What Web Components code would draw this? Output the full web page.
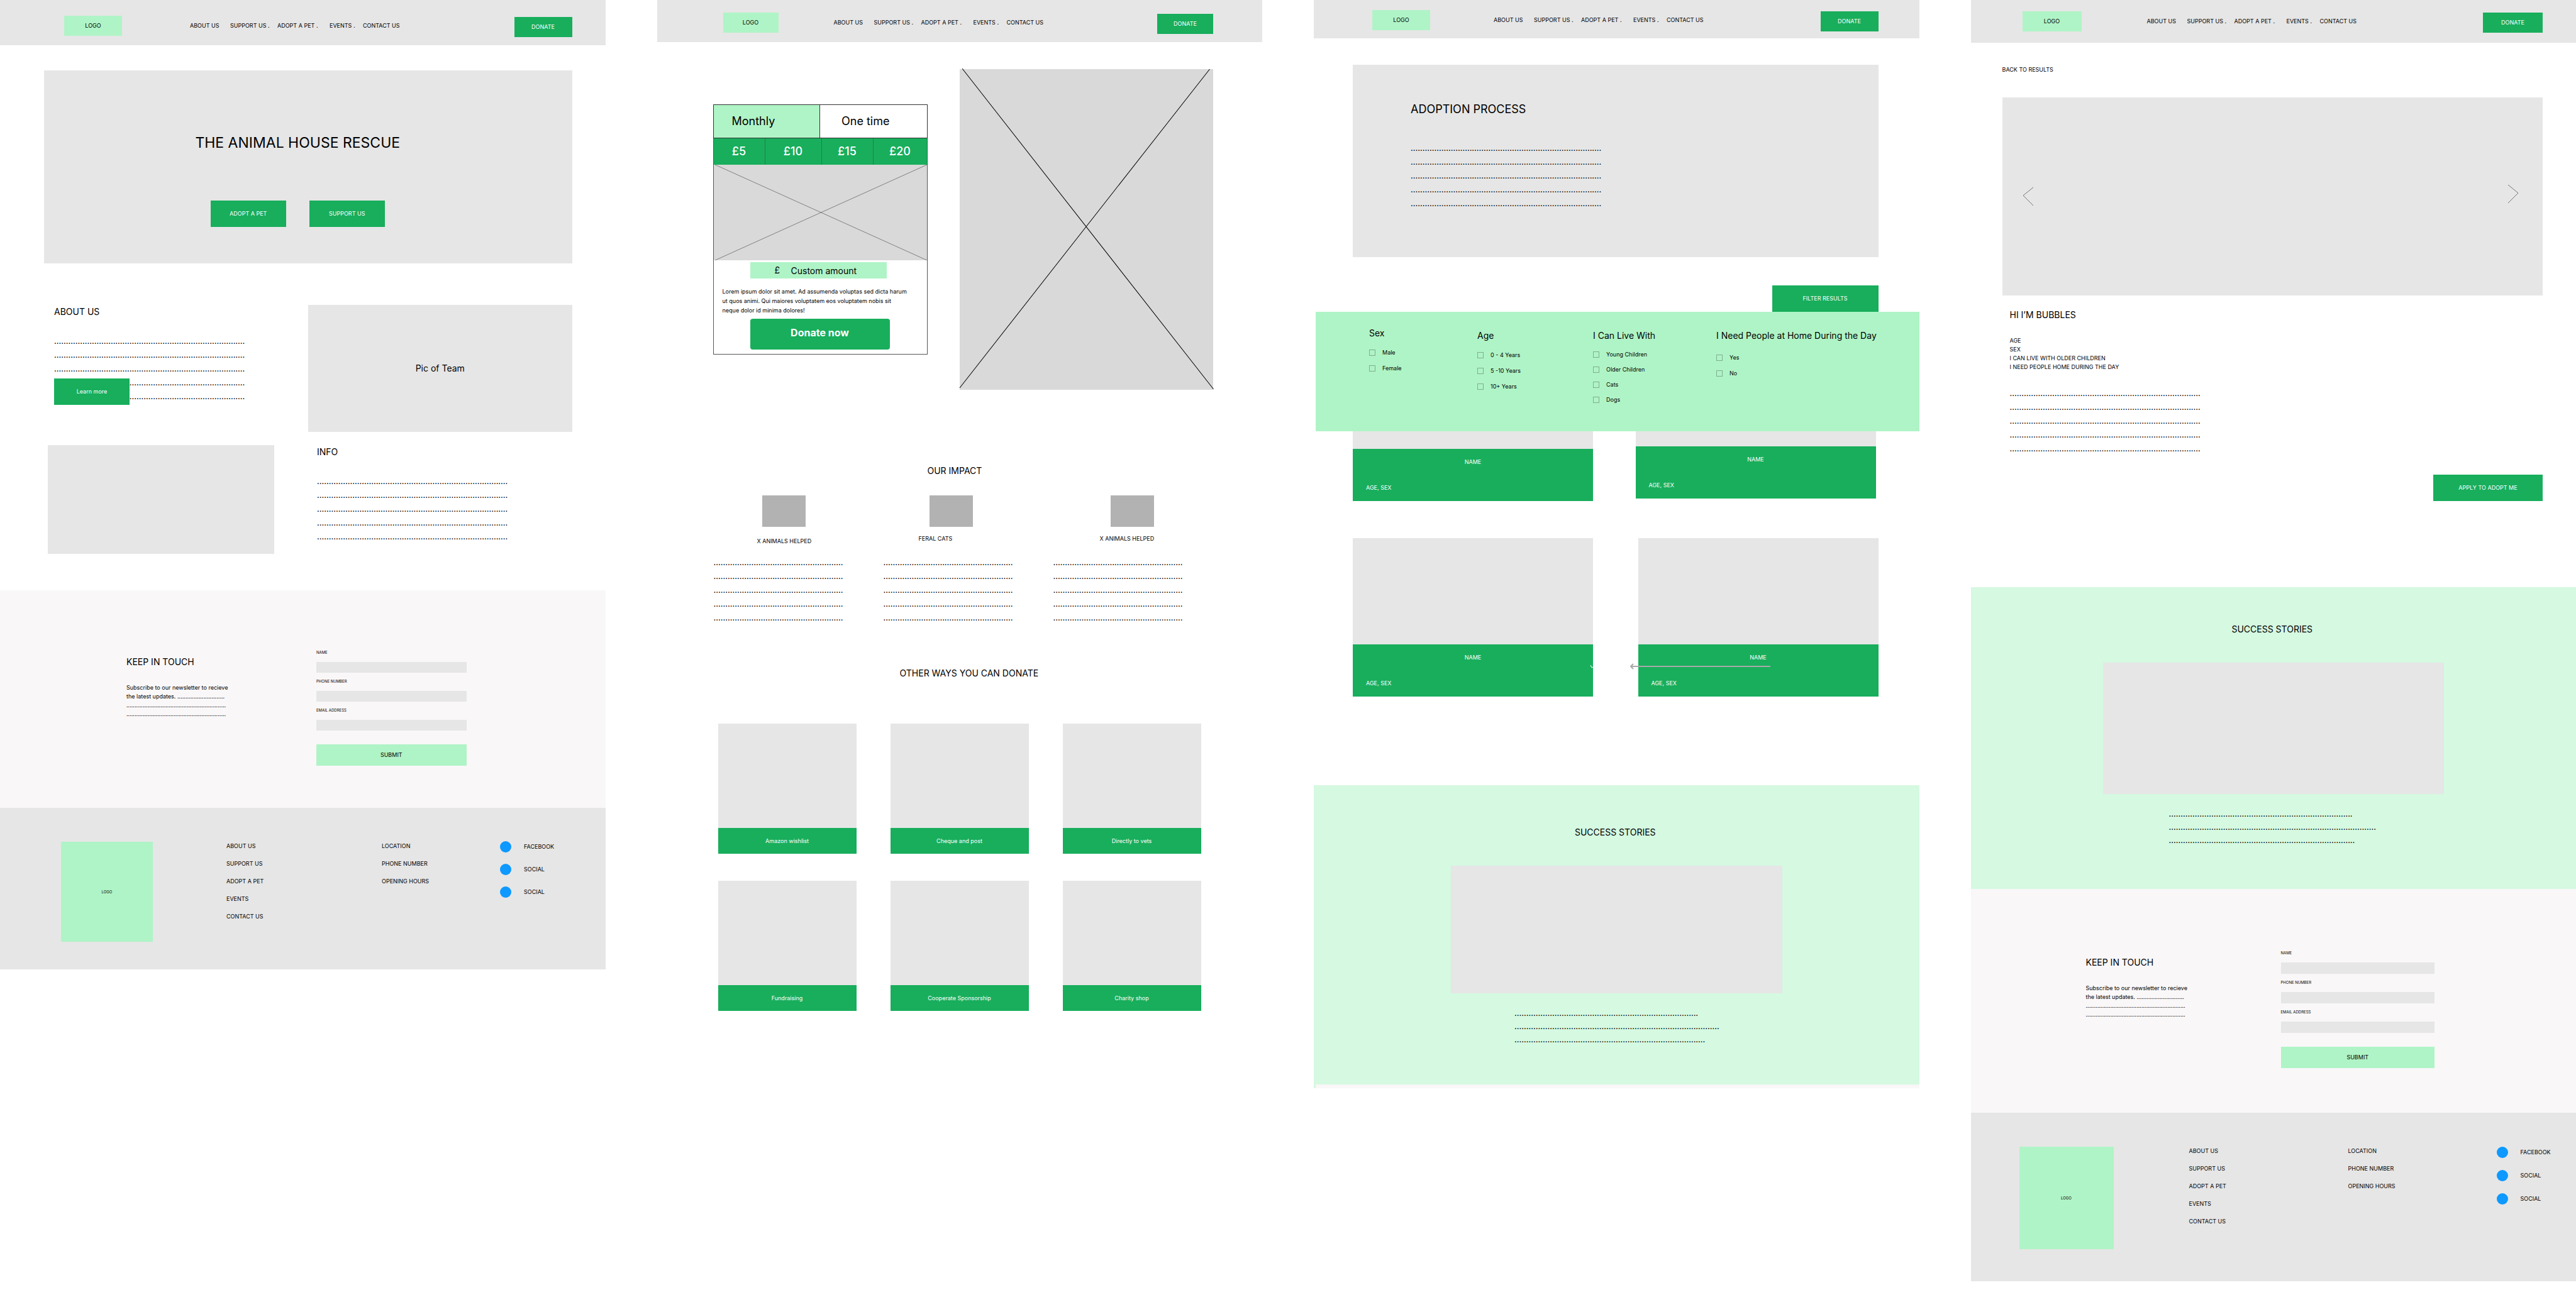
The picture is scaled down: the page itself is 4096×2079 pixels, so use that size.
<!DOCTYPE html>
<html lang="en">
<head>
<meta charset="utf-8">
<title>The Animal House Rescue – wireframes</title>
<style>
  body {
    margin: 0;
    background: #fff;
    color: #000;
    font: 9px/14px Inter, "Liberation Sans", sans-serif;
    --green: #18ae5c;
    --mint: #aff4c6;
    --pale: #d5f9e1;
    --grey: #e6e6e6;
    --mid: #d9d9d9;
  }
  .boards {
    display: grid;
    grid-template-columns: repeat(4, minmax(0, 1fr));
    column-gap: 82px;
    align-items: start;
  }
</style>
</head>
<body>
<main class="boards">
  <home-page></home-page>
  <donate-page></donate-page>
  <adopt-page></adopt-page>
  <pet-page></pet-page>
</main>

<script>
const RESET = `
  * { box-sizing: border-box; }
  :host { display: block; }
  :host([hidden]) { display: none; }
  h1, h2, h3, p, ul, fieldset { margin: 0; padding: 0; border: 0; list-style: none; font-weight: 400; }
  h2 { font-size: 14px; line-height: 22px; }
  a { color: inherit; text-decoration: none; }
  button, input { font: inherit; color: inherit; border: 0; border-radius: 0; padding: 0; margin: 0; }
  .pic { background: var(--grey); }
`;

function define(name, css, html) {
  customElements.define(name, class extends HTMLElement {
    constructor() {
      super();
      this.attachShadow({ mode: 'open' });
      this.shadowRoot.innerHTML =
        `<style>${RESET}${css}</style>${typeof html === 'function' ? html(this) : html}`;
    }
  });
}

/* Solid call-to-action button */
define('action-button', `
  :host { width: 120px; height: 42px; }
  button { width: 100%; height: 100%; background: var(--fill, var(--green)); color: var(--ink, #fff); }
`, `<button type="button"><slot></slot></button>`);

/* Placeholder copy: rows of leader dots, one count per row */
define('dot-lines', `
  :host { font-size: 13px; line-height: 22px; white-space: nowrap; }
`, el => el.getAttribute('rows').split(' ').map(n => `<p>${'.'.repeat(+n)}</p>`).join(''));

define('site-header', `
  header { display: grid; grid-template-columns: var(--logo) 1fr var(--cta); align-items: start;
    height: var(--h); padding: var(--top) var(--right) 0 var(--left); background: var(--grey); }
  .logo { display: grid; place-items: center; height: 32px; background: var(--mint); }
  nav { display: grid; grid-template-columns: 64px 75px 83px 53px auto; align-items: center;
    height: 32px; padding-left: var(--nav); white-space: nowrap; }
  action-button { width: auto; height: 32px; margin-top: 2px; }
`, `<header>
  <a class="logo" href="#">LOGO</a>
  <nav><a href="#">ABOUT US</a><a href="#">SUPPORT US .</a><a href="#">ADOPT A PET .</a><a href="#">EVENTS .</a><a href="#">CONTACT US</a></nav>
  <action-button>DONATE</action-button>
</header>`);

define('contact-band', `
  section { display: grid; grid-template-columns: var(--lead) 1fr; height: var(--h);
    padding: var(--top) var(--right) 0 var(--left); background: #f9f7f8; align-items: start; }
  .copy { padding-top: 9px; }
  .copy p { margin-top: 23px; white-space: nowrap; }
  form { display: grid; row-gap: 9px; }
  .field { display: grid; row-gap: 10px; }
  label { font-size: 6px; line-height: 10px; }
  input { width: 100%; height: var(--box); background: var(--grey); }
  button { height: 34px; margin-top: 13px; background: var(--mint); }
`, `<section>
  <div class="copy"><h2>KEEP IN TOUCH</h2>
    <p>Subscribe to our newsletter to recieve<br>the latest updates. .............................<br>.............................................................<br>.............................................................</p></div>
  <form>
    <div class="field"><label for="n">NAME</label><input id="n" type="text"></div>
    <div class="field"><label for="t">PHONE NUMBER</label><input id="t" type="tel"></div>
    <div class="field"><label for="e">EMAIL ADDRESS</label><input id="e" type="email"></div>
    <button type="button">SUBMIT</button>
  </form>
</section>`);

define('site-footer', `
  footer { display: grid; grid-template-columns: var(--cols) auto; align-items: start; justify-content: start;
    height: var(--h); padding: 44px 0 0 var(--left); background: var(--grey); }
  .logo { display: grid; place-items: center; width: var(--logo-w); height: var(--logo-h); margin-top: 10px;
    background: var(--mint); font-size: 6px; }
  ul.links { margin-top: 3px; line-height: 28px; }
  .social li { display: grid; grid-template-columns: 18px auto; column-gap: 20px; align-items: center; height: var(--row); }
  i { width: 18px; height: 18px; border-radius: 50%; background: #0d99ff; }
`, `<footer>
  <a class="logo" href="#">LOGO</a>
  <ul class="links"><li><a href="#">ABOUT US</a></li><li><a href="#">SUPPORT US</a></li><li><a href="#">ADOPT A PET</a></li><li><a href="#">EVENTS</a></li><li><a href="#">CONTACT US</a></li></ul>
  <ul class="links"><li>LOCATION</li><li>PHONE NUMBER</li><li>OPENING HOURS</li></ul>
  <ul class="social"><li><i></i><a href="#">FACEBOOK</a></li><li><i></i><a href="#">SOCIAL</a></li><li><i></i><a href="#">SOCIAL</a></li></ul>
</footer>`);

define('success-stories', `
  section { display: flow-root; height: var(--h); background: var(--pale); padding-top: var(--top); }
  h2 { text-align: center; padding-right: 4px; }
  .pic { height: var(--pic-h); margin: 42px var(--side) 0; }
  dot-lines { margin: 21px 0 0 var(--text); line-height: 21px; }
`, el => `<section><h2>SUCCESS STORIES</h2><div class="pic"></div><dot-lines rows="${el.getAttribute('rows')}"></dot-lines></section>`);

/* ---------- Home ---------- */
define('home-page', `
  site-header { --h: 72px; --top: 25px; --left: 102px; --right: 53px; --logo: 92px; --cta: 92px; --nav: 108px; }
  .hero { height: 307px; margin: 40px 53px 0 70px; padding: 99px 33px 0 0; text-align: center; }
  h1 { font-size: 23px; line-height: 32px; }
  .cta { display: flex; justify-content: center; gap: 37px; margin-top: 76px; }
  .split { display: grid; grid-template-columns: 420px 1fr; row-gap: 21px; margin: 66px 53px 0 70px; }
  .about { position: relative; padding-left: 16px; }
  .info { padding-left: 14px; }
  dot-lines { margin-top: 24px; }
  .about action-button { position: absolute; left: 16px; top: 117px; }
  .team { display: grid; place-items: center; height: 202px; font-size: 14px; }
  .room { width: 360px; height: 173px; margin-left: 6px; }
  contact-band { --h: 346px; --top: 94px; --left: 201px; --right: 221px; --lead: 302px; --box: 17px; margin-top: 58px; }
  site-footer { --h: 257px; --left: 97px; --cols: 263px 247px 188px; --logo-w: 146px; --logo-h: 159px; --row: 36px; }
`, `
<site-header></site-header>
<section class="hero pic"><h1>THE ANIMAL HOUSE RESCUE</h1>
  <div class="cta"><action-button>ADOPT A PET</action-button><action-button>SUPPORT US</action-button></div></section>
<div class="split">
  <section class="about"><h2>ABOUT US</h2><dot-lines rows="81 81 81 81 81"></dot-lines><action-button>Learn more</action-button></section>
  <div class="pic team">Pic of Team</div>
  <div class="pic room"></div>
  <section class="info"><h2>INFO</h2><dot-lines rows="81 81 81 81 81"></dot-lines></section>
</div>
<contact-band></contact-band>
<site-footer></site-footer>`);

/* ---------- Donate ---------- */
define('donate-widget', `
  .frame { border: 1px solid #555; padding-bottom: 7px; }
  .tabs { display: grid; grid-template-columns: 1fr 1fr; height: 54px; margin: -1px -1px 0; border: 1px solid #333; font-size: 18px; }
  .tabs button { text-align: left; background: #fff; }
  .tabs button:first-child { background: var(--mint); border-right: 1px solid #333; padding-left: 29px; }
  .tabs button:last-child { padding-left: 34px; }
  .amounts { display: grid; grid-template-columns: 81px 90px 82px 1fr; height: 42px; font-size: 18px; font-weight: 500; color: #fff; background: var(--green); }
  .amounts button { background: none; }
  .amounts button + button { border-left: 1px solid #2b7a4f; }
  svg { display: block; width: 100%; height: 152px; background: var(--mid); }
  .custom { display: grid; grid-template-columns: 26px 1fr; align-items: center; width: 217px; height: 26px; margin: 3px 0 0 58px; padding-left: 39px; background: var(--mint); font-size: 14px; }
  .custom input { min-width: 0; width: 100%; background: none; }
  .custom input::placeholder { color: #000; opacity: 1; }
  p { margin: 13px 0 0 14px; line-height: 15px; white-space: nowrap; }
  .go { display: block; width: 222px; height: 49px; margin: 6px 0 0 58px; padding: 0 0 6px; border-radius: 4px; background: var(--green); color: #fff; font-size: 16px; font-weight: 700; }
`, `<div class="frame">
  <div class="tabs"><button type="button">Monthly</button><button type="button">One time</button></div>
  <div class="amounts"><button type="button">£5</button><button type="button">£10</button><button type="button">£15</button><button type="button">£20</button></div>
  <svg viewBox="0 0 341 152" preserveAspectRatio="none"><path d="M2 0 341 152M341 0 2 152" stroke="#808080" fill="none"/></svg>
  <label class="custom"><span>£</span><input type="text" placeholder="Custom amount"></label>
  <p>Lorem ipsum dolor sit amet. Ad assumenda voluptas sed dicta harum<br>ut quos animi. Qui maiores voluptatem eos voluptatem nobis sit<br>neque dolor id minima dolores!</p>
  <button class="go" type="button">Donate now</button>
</div>`);

define('impact-item', `
  .thumb { width: 69px; height: 50px; margin-left: var(--thumb); background: #b2b2b2; }
  p { height: 45px; padding: var(--drop, 12px) 0 0 var(--cap); }
`, `<div class="thumb"></div><p><slot></slot></p><dot-lines rows="55 55 55 55 55"></dot-lines>`);

define('way-card', `
  .pic { height: 166px; }
  a { display: grid; place-items: center; height: 41px; background: var(--green); color: #fff; }
`, `<div class="pic"></div><a href="#"><slot></slot></a>`);

define('donate-page', `
  site-header { --h: 67px; --top: 20px; --left: 105px; --right: 78px; --logo: 88px; --cta: 89px; --nav: 88px; }
  .give { display: grid; grid-template-columns: 341px 1fr; column-gap: 51px; align-items: start; margin: 43px 78px 0 89px; }
  donate-widget { margin-top: 56px; }
  .give > svg { display: block; width: 100%; height: 510px; background: var(--mid); overflow: visible; }
  .impact-title { margin: 118px 0 0 430px; }
  .impact { display: grid; grid-template-columns: repeat(3, 270px); margin: 28px 0 0 90px; }
  .ways-title { margin: 67px 0 0 386px; }
  .ways { display: grid; grid-template-columns: repeat(3, 220px); gap: 43px 54px; margin: 69px 0 0 97px; }
`, `
<site-header></site-header>
<div class="give"><donate-widget></donate-widget>
  <svg viewBox="0 0 403 510" preserveAspectRatio="none"><path d="M4-1 403 509M397 0 0 507" stroke="#000" fill="none"/></svg></div>
<h2 class="impact-title">OUR IMPACT</h2>
<div class="impact">
  <impact-item style="--thumb:77px;--cap:69px;--drop:16px">X ANIMALS HELPED</impact-item>
  <impact-item style="--thumb:73px;--cap:56px">FERAL CATS</impact-item>
  <impact-item style="--thumb:91px;--cap:74px">X ANIMALS HELPED</impact-item>
</div>
<h2 class="ways-title">OTHER WAYS YOU CAN DONATE</h2>
<div class="ways">
  <way-card>Amazon wishlist</way-card><way-card>Cheque and post</way-card><way-card>Directly to vets</way-card>
  <way-card>Fundraising</way-card><way-card>Cooperate Sponsorship</way-card><way-card>Charity shop</way-card>
</div>`);

/* ---------- Adopt ---------- */
define('filter-group', `
  legend { padding: 0; font-size: 14px; line-height: 20px; white-space: nowrap; }
  fieldset { min-width: 0; }
  .list { display: grid; padding-top: var(--gap, 8px); }
  label { display: grid; grid-template-columns: 10px auto; column-gap: 11px; align-items: center; justify-content: start; height: var(--row, 25px); }
  input { appearance: none; width: 10px; height: 10px; border: 1px solid #7fae8f; }
`, el => `<fieldset><legend>${el.getAttribute('name')}</legend><div class="list">${
  el.getAttribute('options').split('|').map(o => `<label><input type="checkbox"><span>${o}</span></label>`).join('')
}</div></fieldset>`);

define('pet-card', `
  .pic { height: 169px; }
  .info { display: grid; grid-template-rows: 41px 42px; align-items: center; background: var(--green); color: #fff; }
  .name { text-align: center; }
  .meta { padding-left: 21px; }
`, `<div class="pic"></div><div class="info"><span class="name">NAME</span><span class="meta">AGE, SEX</span></div>`);

define('adopt-page', `
  site-header { --h: 61px; --top: 16px; --left: 93px; --right: 65px; --logo: 92px; --cta: 92px; --nav: 101px; }
  .hero { height: 306px; margin: 42px 65px 0 62px; padding: 57px 0 0 92px; }
  h1 { font-size: 18px; line-height: 28px; }
  .hero dot-lines { margin-top: 36px; }
  .filter { position: relative; display: flex; justify-content: flex-end; margin-top: 45px; padding-right: 65px; }
  .filter action-button { width: 169px; }
  .panel { position: absolute; z-index: 1; top: 100%; left: 3px; right: 0; height: 190px; background: var(--mint);
    display: grid; grid-template-columns: 172px 184px 196px auto; align-items: start; justify-content: start; padding: 28px 0 0 85px; }
  .panel filter-group:first-child { margin-top: -4px; }
  .row { position: relative; display: flex; justify-content: space-between; margin: 49px 65px 0 62px; }
  .row + .row { margin-top: 59px; }
  pet-card { width: 382px; }
  .row:not(.last) { padding-right: 4px; }
  .row:not(.last) pet-card + pet-card { margin: -4px 0 4px; }
  .row svg { position: absolute; left: 376px; top: 199px; width: 290px; height: 10px; }
  success-stories { --h: 476px; --top: 64px; --pic-h: 203px; --side: 218px; --text: 319px; margin-top: 141px; }
  .edge { height: 6px; border-left: 3px solid var(--pale); background: #f9f7f8; }
`, `
<site-header></site-header>
<section class="hero pic"><h1>ADOPTION PROCESS</h1><dot-lines rows="81 81 81 81 81"></dot-lines></section>
<div class="filter"><action-button>FILTER RESULTS</action-button>
  <div class="panel">
    <filter-group name="Sex" options="Male|Female"></filter-group>
    <filter-group name="Age" options="0 - 4 Years|5 -10 Years|10+ Years"></filter-group>
    <filter-group style="--row:24px" name="I Can Live With" options="Young Children|Older Children|Cats|Dogs"></filter-group>
    <filter-group style="--gap:12px" name="I Need People at Home During the Day" options="Yes|No"></filter-group>
  </div></div>
<div class="row"><pet-card></pet-card><pet-card></pet-card></div>
<div class="row last"><pet-card></pet-card><pet-card></pet-card>
  <svg viewBox="0 0 290 10" fill="none"><path d="M2 3 4 7 6 6" stroke="#fff"/><path d="M288 5H66M70 1 66 5 70 9" stroke="#a9a9a9" stroke-width="2"/></svg></div>
<success-stories rows="78 87 81"></success-stories>
<div class="edge"></div>`);

/* ---------- Pet profile ---------- */
define('pet-page', `
  site-header { --h: 68px; --top: 18px; --left: 82px; --right: 53px; --logo: 94px; --cta: 95px; --nav: 104px; }
  .back { display: block; margin: 36px 0 0 50px; }
  .gallery { display: flex; justify-content: space-between; align-items: flex-start; height: 315px; margin: 37px 53px 0 50px; padding: 138px 38px 0 32px; }
  .gallery button { width: 18px; height: 30px; background: none; }
  .gallery button:first-child { margin-top: 4px; }
  svg { display: block; width: 18px; height: 30px; }
  .bio { margin: 20px 0 0 62px; }
  .bio p { margin: 23px 0; }
  .apply { width: 174px; margin: 31px 53px 0 auto; }
  success-stories { --h: 480px; --top: 56px; --pic-h: 209px; --side: 210px; --text: 315px; margin-top: 137px; }
  contact-band { --h: 356px; --top: 97px; --left: 183px; --right: 225px; --lead: 310px; --box: 18px; }
  site-footer { --h: 268px; --left: 77px; --cols: 270px 253px 236px; --logo-w: 150px; --logo-h: 163px; --row: 37px; }
`, `
<site-header></site-header>
<a class="back" href="#">BACK TO RESULTS</a>
<div class="gallery pic">
  <button type="button" aria-label="Previous"><svg viewBox="0 0 18 30"><path d="M17 1 1 14 17 30" fill="none" stroke="#777"/></svg></button>
  <button type="button" aria-label="Next"><svg viewBox="0 0 18 30"><path d="M1 1 17 14 1 30" fill="none" stroke="#777"/></svg></button>
</div>
<section class="bio"><h2>HI I’M BUBBLES</h2>
  <p>AGE<br>SEX<br>I CAN LIVE WITH OLDER CHILDREN<br>I NEED PEOPLE HOME DURING THE DAY</p>
  <dot-lines rows="81 81 81 81 81"></dot-lines></section>
<action-button class="apply">APPLY TO ADOPT ME</action-button>
<success-stories rows="78 88 79"></success-stories>
<contact-band></contact-band>
<site-footer></site-footer>`);
</script>
</body>
</html>
